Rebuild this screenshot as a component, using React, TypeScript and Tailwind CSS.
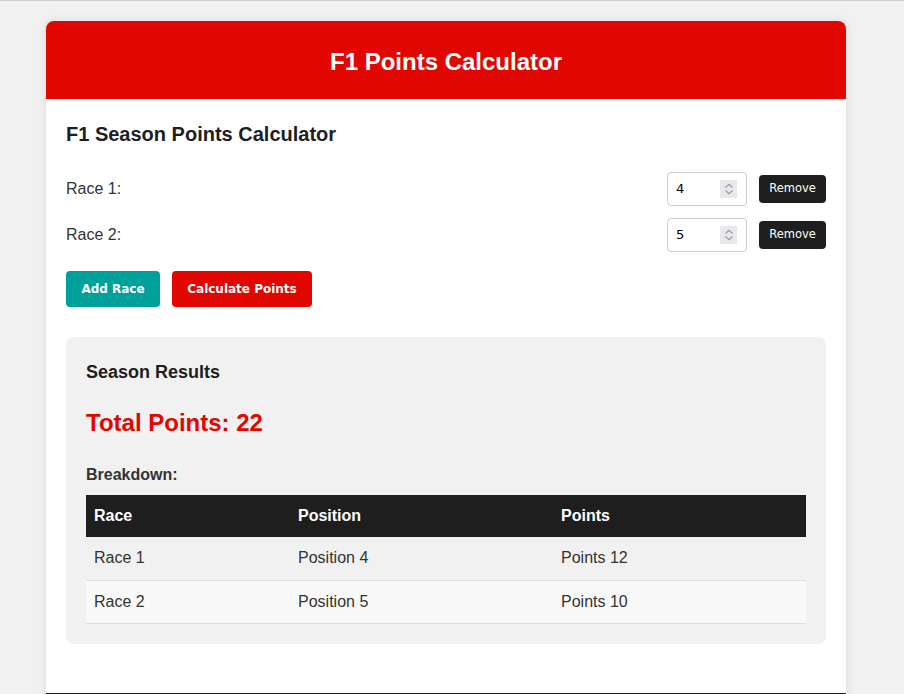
import { useState } from 'react'

type Race = { id: number; position: number }

const pointsTable: Record<number, number> = {
  1: 25, 2: 18, 3: 15, 4: 12, 5: 10, 6: 8, 7: 6, 8: 4, 9: 2, 10: 1,
}

function Spinner() {
  return (
    <div className="flex h-[18px] w-[17px] shrink-0 flex-col items-center justify-center bg-[#e9e9ed]">
      <svg width="10" height="14" viewBox="0 0 10 14" fill="none" stroke="#9a9aa0" strokeWidth="1.2">
        <path d="M1.5 5.5 L5 2.2 L8.5 5.5" />
        <path d="M1.5 8.5 L5 11.8 L8.5 8.5" />
      </svg>
    </div>
  )
}

export default function App() {
  const [races, setRaces] = useState<Race[]>([
    { id: 1, position: 4 },
    { id: 2, position: 5 },
  ])

  const total = races.reduce((sum, r) => sum + (pointsTable[r.position] ?? 0), 0)

  return (
    <div className="min-h-screen border-t border-[#cfcfcf] bg-[#f1f1f1] pt-5 font-['Liberation_Sans',Arial,sans-serif]">
      <div className="ml-[46px] w-[800px] overflow-hidden rounded-t-lg bg-white shadow-[0_0_10px_rgba(0,0,0,0.1)]">
        {/* Header */}
        <header className="flex h-[78px] items-center justify-center bg-[#e10600] pt-1">
          <h1 className="text-[24px] font-bold text-white">F1 Points Calculator</h1>
        </header>

        <div className="px-5 pb-[49px]">
          <h2 className="mt-[24px] text-[20px] font-bold leading-[23px] text-[#1e1e1e]">
            F1 Season Points Calculator
          </h2>

          {/* Race rows */}
          <div className="mt-[26px] flex flex-col gap-3">
            {races.map((race, i) => (
              <div key={race.id} className="flex h-[34px] items-center">
                <label className="flex-1 text-[16px] text-[#333]">Race {i + 1}:</label>
                <div className="flex h-[34px] w-[80px] items-center rounded border border-[#ccc] pl-2 pr-[9px]">
                  <input
                    type="text"
                    value={race.position}
                    onChange={(e) => {
                      const v = parseInt(e.target.value) || 0
                      setRaces(races.map((r) => (r.id === race.id ? { ...r, position: v } : r)))
                    }}
                    className="w-full min-w-0 bg-transparent font-['DejaVu_Sans',sans-serif] text-[13px] text-black outline-none"
                  />
                  <Spinner />
                </div>
                <button
                  onClick={() => setRaces(races.filter((r) => r.id !== race.id))}
                  className="ml-3 h-[28px] w-[67px] rounded bg-[#1e1e1e] font-['DejaVu_Sans',sans-serif] text-[11.5px] text-white"
                >
                  Remove
                </button>
              </div>
            ))}
          </div>

          {/* Actions */}
          <div className="mt-[19px] flex gap-3">
            <button
              onClick={() => setRaces([...races, { id: Date.now(), position: 1 }])}
              className="h-9 w-[94px] rounded bg-[#00a19b] font-['DejaVu_Sans',sans-serif] text-[12px] font-bold text-white"
            >
              Add Race
            </button>
            <button className="h-9 w-[140px] rounded bg-[#e10600] font-['DejaVu_Sans',sans-serif] text-[12px] font-bold text-white">
              Calculate Points
            </button>
          </div>

          {/* Results */}
          <section className="mt-[30px] rounded-lg bg-[#f1f1f1] px-5 pt-[25px] pb-[20px]">
            <h3 className="text-[18px] font-bold leading-[21px] text-[#1e1e1e]">Season Results</h3>
            <p className="mt-[26px] text-[24px] font-bold leading-[28px] text-[#e10600]">
              Total Points: {total}
            </p>
            <h4 className="mt-[29px] text-[16px] font-bold leading-[18px] text-[#333]">Breakdown:</h4>
            <table className="mt-[11px] w-full border-collapse text-left text-[16px]">
              <thead>
                <tr className="h-[42px] bg-[#1e1e1e] text-white">
                  <th className="w-[204px] px-2 font-bold">Race</th>
                  <th className="w-[263px] px-2 font-bold">Position</th>
                  <th className="px-2 font-bold">Points</th>
                </tr>
              </thead>
              <tbody className="text-[#333]">
                {races.map((race, i) => (
                  <tr
                    key={race.id}
                    className={`h-[43px] border-b border-[#ddd] ${i % 2 === 1 ? 'bg-[#f9f9f9]' : ''}`}
                  >
                    <td className="px-2">Race {i + 1}</td>
                    <td className="px-2">Position {race.position}</td>
                    <td className="px-2">Points {pointsTable[race.position] ?? 0}</td>
                  </tr>
                ))}
              </tbody>
            </table>
          </section>
        </div>

        <footer className="h-10 bg-[#1e1e1e]" />
      </div>
    </div>
  )
}
